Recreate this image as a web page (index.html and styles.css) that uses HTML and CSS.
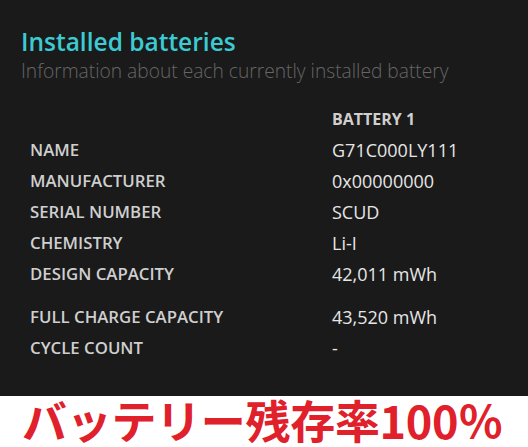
FILE: index.html
```html
<!DOCTYPE html>
<html>
<head>
<meta charset="utf-8">
<link rel="stylesheet" href="styles.css">
</head>
<body>
<div class="panel">
  <h1 class="title">Installed batteries</h1>
  <p class="subtitle">Information about each currently installed battery</p>
  <table class="info">
    <tr class="head"><td></td><th>BATTERY 1</th></tr>
    <tr><td class="label">NAME</td><td class="value">G71C000LY111</td></tr>
    <tr><td class="label">MANUFACTURER</td><td class="value">0x00000000</td></tr>
    <tr><td class="label">SERIAL NUMBER</td><td class="value">SCUD</td></tr>
    <tr><td class="label">CHEMISTRY</td><td class="value">Li-I</td></tr>
    <tr class="spaced"><td class="label">DESIGN CAPACITY</td><td class="value">42,011 mWh</td></tr>
    <tr><td class="label">FULL CHARGE CAPACITY</td><td class="value">43,520 mWh</td></tr>
    <tr><td class="label">CYCLE COUNT</td><td class="value">-</td></tr>
  </table>
</div>
<div class="caption">バッテリー残存率100％</div>
</body>
</html>
```
FILE: styles.css
```css
html, body {
  margin: 0;
  padding: 0;
  background: #ffffff;
  width: 528px;
  height: 447px;
  overflow: hidden;
}
.panel {
  background: #1a1a1a;
  height: 396px;
  box-sizing: border-box;
  padding: 26px 0 0 21px;
  font-family: "Open Sans", "Noto Sans", sans-serif;
}
.title {
  margin: 0;
  font-size: 24.5px;
  font-weight: 600;
  color: #3ccbd3;
  line-height: 32px;
}
.subtitle {
  margin: 0;
  font-size: 19.2px;
  font-weight: 300;
  color: #666666;
  line-height: 26px;
}
.info {
  border-collapse: collapse;
  margin-top: 19px;
  margin-left: 9px;
}
.info td, .info th {
  padding: 0;
  height: 31px;
  text-align: left;
  vertical-align: middle;
}
.head th {
  font-size: 16px;
  font-weight: 700;
  color: #cfcfcf;
  height: 26px;
}
.label {
  width: 302px;
  font-size: 16.8px;
  font-weight: 600;
  color: #cfcfcf;
}
.value {
  font-size: 18px;
  font-weight: 400;
  color: #e6e6e6;
}
.spaced td {
  height: 43px;
  vertical-align: top;
  padding-top: 4px;
  box-sizing: border-box;
}
.caption {
  font-family: "Noto Sans CJK JP", sans-serif;
  font-weight: 700;
  font-size: 45px;
  color: #e0202a;
  line-height: 47px;
  height: 51px;
  padding-left: 22px;
  white-space: nowrap;
  letter-spacing: -0.3px;
}
```
